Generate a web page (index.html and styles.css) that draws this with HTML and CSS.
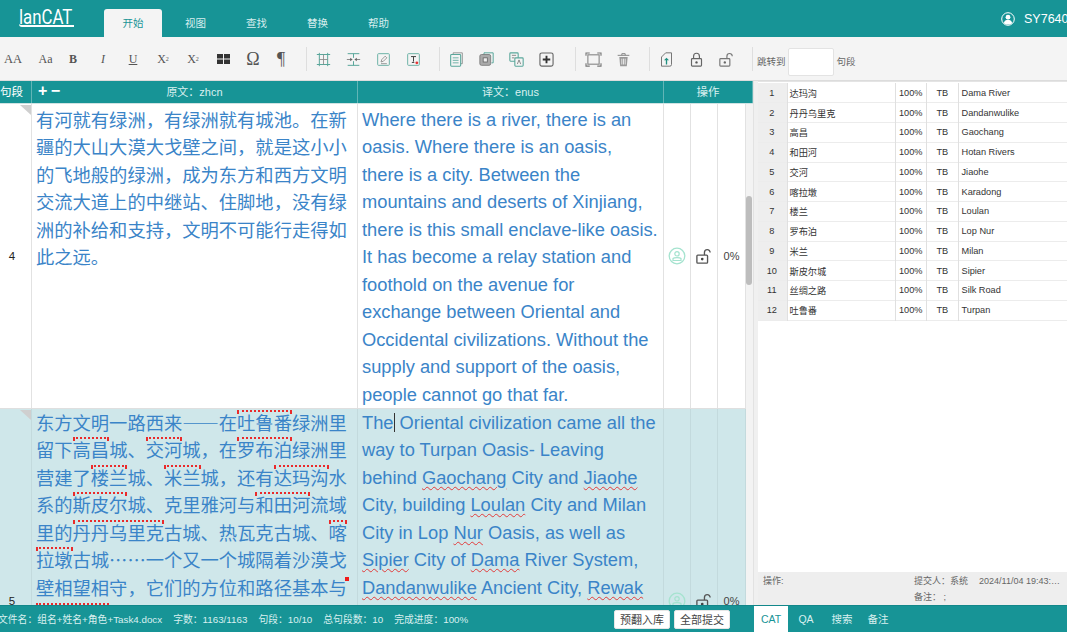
FILE: index.html
```html
<!DOCTYPE html>
<html lang="zh-CN">
<head>
    <meta charset="UTF-8">
    <meta name="viewport" content="width=device-width, initial-scale=1.0">
    <title>lanCAT</title>
    <link rel="stylesheet" href="styles.css">
</head>
<body>
    <header class="topbar">
        <div class="logo"><span class="logo-text">lanCAT</span></div>
        <nav class="menu">
            <a class="menu-item active">开始</a>
            <a class="menu-item">视图</a>
            <a class="menu-item">查找</a>
            <a class="menu-item">替换</a>
            <a class="menu-item">帮助</a>
        </nav>
        <div class="user">
            <svg width="14" height="14" viewBox="0 0 14 14"><circle cx="7" cy="7" r="6.3" fill="none" stroke="#fff" stroke-width="1"/><circle cx="7" cy="5.2" r="2.4" fill="#fff"/><path d="M2.8 11.2c.6-2.6 2.2-3.4 4.2-3.4s3.6.8 4.2 3.4c-2.4 1.7-6 1.7-8.4 0z" fill="#fff"/></svg>
            <span>SY7640</span>
        </div>
    </header>

    <div class="toolbar">
        <div class="group group-format">
            <span class="tool serif tool-aa">AA</span>
            <span class="tool serif tool-sm tool-shift">Aa</span>
            <span class="tool serif tool-sm bold">B</span>
            <span class="tool serif tool-sm italic">I</span>
            <span class="tool serif tool-sm underline">U</span>
            <span class="tool serif tool-sm">X<sup>2</sup></span>
            <span class="tool serif tool-sm">X<sub>2</sub></span>
            <span class="tool"><svg class="icon-grid" viewBox="0 0 13 10" fill="#333"><rect width="6" height="4.5"/><rect x="7" width="6" height="4.5"/><rect y="5.5" width="6" height="4.5"/><rect x="7" y="5.5" width="6" height="4.5"/></svg></span>
            <span class="tool serif tool-lg">Ω</span>
            <span class="tool serif tool-lg tool-pilcrow">¶</span>
        </div>
        <i class="sep"></i>
        <div class="group">
            <span class="tool"><svg viewBox="0 0 18 18" fill="none"><path d="M1 3h16M1 15h16M4 1v16M14 1v16" stroke="#5aa79b" stroke-width="1.2"/><path d="M4 9h10M9 3v12" stroke="#888"/></svg></span>
            <span class="tool"><svg viewBox="0 0 18 18" fill="none"><path d="M2 2h14M2 16h14M9 2v5M9 11v5" stroke="#5aa79b" stroke-width="1.2"/><path d="M1 9h5M17 9h-5" stroke="#777"/><path d="M8 9L5 7v4zM10 9l3-2v4z" fill="#666"/></svg></span>
            <span class="tool"><svg viewBox="0 0 18 18" fill="none"><rect x="2" y="2" width="14" height="14" rx="1" stroke="#6fb3a8" stroke-width="1.2"/><path d="M6 12l1-3 4-4 2 2-4 4zM6 14h7" stroke="#888"/></svg></span>
            <span class="tool"><svg viewBox="0 0 18 18" fill="none"><rect x="2" y="2" width="14" height="14" rx="1" stroke="#6fb3a8" stroke-width="1.2"/><path d="M6 5.5h6M9 5.5v6M7 12.5h3" stroke="#444" stroke-width="1.2"/><circle cx="13" cy="13" r="1.7" fill="#e53333"/></svg></span>
        </div>
        <i class="sep"></i>
        <div class="group">
            <span class="tool"><svg viewBox="0 0 18 18" fill="none"><path d="M5 3V1h11v13h-2" stroke="#888"/><rect x="2" y="3" width="12" height="14" rx="1" stroke="#5aa79b" stroke-width="1.3"/><path d="M4.500 7h7M4.500 10h7M4.500 13h7" stroke="#5aa79b"/></svg></span>
            <span class="tool"><svg viewBox="0 0 18 18" fill="none"><path d="M6 3V1h11v12h-2" stroke="#5aa79b" stroke-width="1.2"/><rect x="1" y="3" width="13" height="13" rx="2" fill="#aaa" stroke="#777"/><rect x="5" y="7" width="5" height="5" fill="#eee" stroke="#666"/></svg></span>
            <span class="tool"><svg viewBox="0 0 18 18" fill="none"><rect x="1" y="1" width="10" height="10" rx="1" stroke="#5aa79b" stroke-width="1.3"/><rect x="7" y="7" width="10" height="10" rx="1" fill="#f4f4f4" stroke="#5aa79b" stroke-width="1.3"/><path d="M3.5 4h5M3.5 7h3" stroke="#777"/><path d="M10 14.5l2-5 2 5" stroke="#777"/></svg></span>
            <span class="tool"><svg viewBox="0 0 16 16" fill="none"><rect x="1" y="1" width="14" height="14" rx="2" stroke="#666" stroke-width="1.2"/><path d="M8 4v8M4 8h8" stroke="#333" stroke-width="2"/></svg></span>
        </div>
        <i class="sep sep-widest"></i>
        <div class="group">
            <span class="tool"><svg class="icon-wide" viewBox="0 0 18 16" fill="none"><rect x="3" y="3" width="12" height="10" stroke="#888" stroke-width="1.2"/><path d="M1 4V1h4M13 1h4v3M17 12v3h-4M5 15H1v-3" stroke="#777" stroke-width="1.2"/></svg></span>
            <span class="tool"><svg viewBox="0 0 16 18" fill="none"><path d="M1 4h14M6 4V2h4v2" stroke="#888" stroke-width="1.2"/><path d="M3 6h10l-1 11H4z" fill="#999"/><path d="M6 8v7M8 8v7M10 8v7" stroke="#f4f4f4"/></svg></span>
        </div>
        <i class="sep"></i>
        <div class="group">
            <span class="tool"><svg viewBox="0 0 16 18" fill="none"><path d="M2 6l5-5h7v14a2 2 0 0 1-2 2H2z" stroke="#777" stroke-width="1.2"/><path d="M8 15V9" stroke="#1f8f80" stroke-width="1.6"/><path d="M8 7l-3 3h6z" fill="#1f8f80"/></svg></span>
            <span class="tool"><svg viewBox="0 0 16 18" fill="none"><rect x="2" y="8" width="12" height="9" rx="1" stroke="#666" stroke-width="1.4"/><path d="M4.5 8V5a3.5 3.5 0 0 1 7 0v3" stroke="#666" stroke-width="1.4"/><circle cx="8" cy="12.5" r="1.4" fill="#555"/></svg></span>
            <span class="tool"><svg viewBox="0 0 18 18" fill="none"><rect x="1" y="8" width="12" height="9" rx="1" stroke="#777" stroke-width="1.4"/><path d="M9.5 8V5a3.200 3.200 0 0 1 6.4 0" stroke="#777" stroke-width="1.4"/><circle cx="7" cy="12.5" r="1.4" fill="#666"/></svg></span>
        </div>
        <i class="sep"></i>
        <span class="jump-label">跳转到</span>
        <input class="jump-input" type="text">
        <span class="jump-label">句段</span>
    </div>

    <main class="main">
        <section class="editor">
            <div class="grid-head">
                <div class="head-num">句段</div>
                <div class="head-source"><b class="plus-minus">+ −</b><span>原文：zhcn</span></div>
                <div class="head-target">译文：enus</div>
                <div class="head-ops">操作</div>
            </div>
            <div class="grid-body">
                <div class="rows">
                    <div class="row">
                        <div class="cell-num"><i class="fold"></i>4</div>
                        <div class="cell-source">有河就有绿洲，有绿洲就有城池。在新疆的大山大漠大戈壁之间，就是这小小的飞地般的绿洲，成为东方和西方文明交流大道上的中继站、住脚地，没有绿洲的补给和支持，文明不可能行走得如此之远。</div>
                        <div class="cell-target">Where there is a river, there is an<br>oasis. Where there is an oasis,<br>there is a city. Between the<br>mountains and deserts of Xinjiang,<br>there is this small enclave-like oasis.<br>It has become a relay station and<br>foothold on the avenue for<br>exchange between Oriental and<br>Occidental civilizations. Without the<br>supply and support of the oasis,<br>people cannot go that far.</div>
                        <div class="cell-op"><svg width="18" height="18" viewBox="0 0 18 18" fill="none"><circle cx="9" cy="9" r="7.8" stroke="#a5e3cf" stroke-width="1.3"/><circle cx="9" cy="6.8" r="2.2" stroke="#a5e3cf" stroke-width="1.2"/><path d="M5 13.5v-2c1-1.2 7-1.2 8 0v2z" stroke="#a5e3cf" stroke-width="1.2"/></svg></div>
                        <div class="cell-op"><svg width="16" height="16" viewBox="0 0 18 18" fill="none"><rect x="1" y="8" width="12" height="9" rx="1" stroke="#555" stroke-width="1.5"/><path d="M9.5 8V5a3.2 3.2 0 0 1 6.4 0" stroke="#555" stroke-width="1.5"/><circle cx="7" cy="12.5" r="1.5" fill="#444"/></svg></div>
                        <div class="cell-op cell-pct">0%</div>
                    </div>
                    <div class="row row-active">
                        <div class="cell-num"><i class="fold"></i>5</div>
                        <div class="cell-source">东方文明一路西来——在<span class="term">吐鲁番</span>绿洲里留下<span class="term">高昌</span>城、<span class="term">交河</span>城，在<span class="term">罗布泊</span>绿洲里营建了<span class="term">楼兰</span>城、<span class="term">米兰</span>城，还有<span class="term">达玛沟</span>水系的<span class="term">斯皮尔</span>城、克里雅河与<span class="term">和田河</span>流域里的<span class="term">丹丹乌里克</span>古城、热瓦克古城、<span class="term">喀</span><span class="term">拉墩</span>古城……一个又一个城隔着沙漠戈壁相望相守，它们的方位和路径基本与<i class="tip"></i><i class="term-cut"></i></div>
                        <div class="cell-target">The<i class="caret"></i> Oriental civilization came all the way to Turpan Oasis- Leaving behind <span class="typo">Gaochang</span> City and <span class="typo">Jiaohe</span> City, building <span class="typo">Loulan</span> City and Milan City in Lop <span class="typo">Nur</span> Oasis, as well as <span class="typo">Sipier</span> City of <span class="typo">Dama</span> River System, <span class="typo">Dandanwulike</span> Ancient City, <span class="typo">Rewak</span></div>
                        <div class="cell-op"><svg width="18" height="18" viewBox="0 0 18 18" fill="none"><circle cx="9" cy="9" r="7.8" stroke="#a5e3cf" stroke-width="1.3"/><circle cx="9" cy="6.8" r="2.2" stroke="#a5e3cf" stroke-width="1.2"/><path d="M5 13.5v-2c1-1.2 7-1.2 8 0v2z" stroke="#a5e3cf" stroke-width="1.2"/></svg></div>
                        <div class="cell-op"><svg width="16" height="16" viewBox="0 0 18 18" fill="none"><rect x="1" y="8" width="12" height="9" rx="1" stroke="#555" stroke-width="1.5"/><path d="M9.5 8V5a3.2 3.2 0 0 1 6.4 0" stroke="#555" stroke-width="1.5"/><circle cx="7" cy="12.5" r="1.5" fill="#444"/></svg></div>
                        <div class="cell-op cell-pct">0%</div>
                    </div>
                </div>
                <div class="scroll-track"><div class="scroll-thumb"></div></div>
            </div>
        </section>

        <aside class="side">
            <div class="term-wrap">
                <table class="term-table">
                    <tr><th>1</th><td class="zh">达玛沟</td><td class="mid">100%</td><td class="mid">TB</td><td>Dama River</td></tr>
                    <tr><th>2</th><td class="zh">丹丹乌里克</td><td class="mid">100%</td><td class="mid">TB</td><td>Dandanwulike</td></tr>
                    <tr><th>3</th><td class="zh">高昌</td><td class="mid">100%</td><td class="mid">TB</td><td>Gaochang</td></tr>
                    <tr><th>4</th><td class="zh">和田河</td><td class="mid">100%</td><td class="mid">TB</td><td>Hotan Rivers</td></tr>
                    <tr><th>5</th><td class="zh">交河</td><td class="mid">100%</td><td class="mid">TB</td><td>Jiaohe</td></tr>
                    <tr><th>6</th><td class="zh">喀拉墩</td><td class="mid">100%</td><td class="mid">TB</td><td>Karadong</td></tr>
                    <tr><th>7</th><td class="zh">楼兰</td><td class="mid">100%</td><td class="mid">TB</td><td>Loulan</td></tr>
                    <tr><th>8</th><td class="zh">罗布泊</td><td class="mid">100%</td><td class="mid">TB</td><td>Lop Nur</td></tr>
                    <tr><th>9</th><td class="zh">米兰</td><td class="mid">100%</td><td class="mid">TB</td><td>Milan</td></tr>
                    <tr><th>10</th><td class="zh">斯皮尔城</td><td class="mid">100%</td><td class="mid">TB</td><td>Sipier</td></tr>
                    <tr><th>11</th><td class="zh">丝绸之路</td><td class="mid">100%</td><td class="mid">TB</td><td>Silk Road</td></tr>
                    <tr><th>12</th><td class="zh">吐鲁番</td><td class="mid">100%</td><td class="mid">TB</td><td>Turpan</td></tr>
                </table>
            </div>
            <div class="info">
                <div class="info-label">操作:</div>
                <div class="info-meta">
                    <div class="info-line"><span>提交人：系统</span><span class="info-date">2024/11/04 19:43:…</span></div>
                    <div class="info-line">备注： ;</div>
                </div>
            </div>
        </aside>
    </main>

    <footer class="bottom">
        <div class="status">
            <span class="stat stat-file">文件名：组名+姓名+角色+Task4.docx</span>
            <span class="stat">字数：1163/1163</span>
            <span class="stat">句段：10/10</span>
            <span class="stat">总句段数：10</span>
            <span class="stat">完成进度：100%</span>
            <div class="status-btns">
                <button class="btn">预翻入库</button>
                <button class="btn">全部提交</button>
            </div>
        </div>
        <div class="side-tabs">
            <a class="side-tab active">CAT</a>
            <a class="side-tab">QA</a>
            <a class="side-tab">搜索</a>
            <a class="side-tab">备注</a>
        </div>
    </footer>
</body>
</html>
```

FILE: styles.css
```css
* {
    box-sizing: border-box;
}

body {
    margin: 0;
    height: 100vh;
    overflow: hidden;
    display: flex;
    flex-direction: column;
    background: #fff;
    color: #333;
    font-family: "Liberation Sans", "Noto Sans CJK SC", sans-serif;
}

.topbar {
    height: 37px;
    flex: none;
    display: flex;
    background: #179496;
    color: #fff;
}

.logo {
    width: 55px;
    height: 18px;
    margin: 9px 0 0 19px;
    border-bottom: 2px solid #fff;
    border-bottom-left-radius: 3px;
    font-family: "Roboto", sans-serif;
    font-size: 21px;
    line-height: 17px;
    white-space: nowrap;
}

.logo-text {
    display: inline-block;
    transform: scaleX(0.8);
    transform-origin: left;
}

.menu {
    display: flex;
    margin-left: 30px;
    padding-top: 9px;
}

.menu-item {
    width: 61px;
    text-align: center;
    font-size: 10.5px;
    line-height: 28px;
    color: #d6eeee;
}

.menu-item.active {
    width: 58px;
    margin-right: 3px;
    background: #f4f4f4;
    border-radius: 3px 3px 0 0;
    color: #179496;
}

.user {
    margin-left: auto;
    width: 66px;
    flex: none;
    display: flex;
    align-items: center;
    gap: 9px;
    overflow: hidden;
    font-size: 12.5px;
    white-space: nowrap;
}

.user svg {
    flex: none;
}

.toolbar {
    height: 44px;
    flex: none;
    display: flex;
    align-items: center;
    background: #f4f4f4;
    border-bottom: 1px solid #dcdcdc;
    padding-top: 1px;
}

.group {
    display: flex;
    align-items: center;
}

.group-format {
    margin-left: -2px;
    margin-right: -3px;
}

.tool {
    width: 30px;
    height: 24px;
    display: flex;
    align-items: center;
    justify-content: center;
    color: #555;
    font-size: 12px;
}

.tool svg {
    width: 15px;
    height: 15px;
}

.tool svg.icon-grid {
    width: 13px;
    height: 10px;
}

.tool svg.icon-wide {
    width: 17px;
}

.serif {
    font-family: "Liberation Serif", serif;
}

.tool-aa {
    font-size: 12.5px;
}

.tool-sm {
    font-size: 12px;
}

.tool-shift {
    padding-left: 5px;
}

.tool-lg {
    font-size: 18px;
}

.tool-pilcrow {
    padding-right: 4px;
}

.bold {
    font-weight: bold;
}

.italic {
    font-style: italic;
}

.underline {
    text-decoration: underline;
}

.tool sup,
.tool sub {
    font-size: 6px;
}

.sep {
    width: 1px;
    height: 24px;
    margin: 0 1px 0 11px;
    background: #dedede;
}

.sep-widest {
    margin-left: 14px;
    margin-right: 2px;
}

.jump-label {
    margin: 4px 0 0 3px;
    font-size: 9.5px;
    color: #666;
}

.jump-input {
    width: 46px;
    height: 28px;
    margin: 5px 0 0 2px;
    border: 1px solid #e3e3e3;
    border-radius: 2px;
    background: #fff;
}

.main {
    flex: 1;
    min-height: 0;
    display: flex;
}

.editor {
    width: 753px;
    flex: none;
    display: flex;
    flex-direction: column;
}

.grid-head {
    height: 23px;
    flex: none;
    display: grid;
    grid-template-columns: 32px 326px 306px 1fr;
    background: #179496;
    color: #d9f0f0;
    font-size: 11px;
    line-height: 22px;
    text-align: center;
    border-bottom: 1px solid #cfe3e3;
}

.grid-head > div {
    border-right: 1px solid #62b5b6;
}

.head-num {
    text-align: left;
    font-size: 11.5px;
    color: #fff;
}

.head-source {
    position: relative;
}

.plus-minus {
    position: absolute;
    left: 6px;
    top: 0;
    font-size: 16px;
    line-height: 20px;
    word-spacing: -1px;
    color: #fff;
}

.head-ops {
    font-size: 11.5px;
}

.grid-body {
    flex: 1;
    min-height: 0;
    display: flex;
    overflow: hidden;
}

.rows {
    width: 746px;
    flex: none;
}

.row {
    height: 305px;
    display: grid;
    grid-template-columns: 32px 326px 306px 27px 27px 28px;
    border-bottom: 1px solid #dfdfdf;
}

.row-active {
    height: 384px;
    background: #cfe7ea;
}

.row > div {
    border-right: 1px solid #e2e2e2;
}

.row-active > div {
    border-right-color: #c3dadd;
}

.cell-num {
    position: relative;
    display: flex;
    align-items: center;
    justify-content: center;
    padding-right: 7px;
    font-size: 11.5px;
    color: #222;
}

.fold {
    position: absolute;
    top: 1px;
    right: 0;
    border-top: 10px solid #cfcfcf;
    border-left: 11px solid transparent;
}

.cell-source,
.cell-target {
    font-size: 18.3px;
    line-height: 27.45px;
    color: #3a84c8;
    overflow: hidden;
}

.cell-source {
    padding: 2px 5px 0 4px;
    font-family: "Noto Sans CJK SC", sans-serif;
}

.cell-target {
    padding: 2px 2px 0 4px;
    white-space: nowrap;
}

.row-active .cell-source,
.row-active .cell-target {
    padding-top: 0;
}

.row-active .cell-target {
    white-space: normal;
}

.cell-op {
    display: flex;
    align-items: center;
    justify-content: center;
}

.cell-pct {
    font-size: 11px;
    color: #444;
}

/* term marks sit over the text so the line boxes stay untouched */
.term {
    position: relative;
}

.term::before {
    content: "";
    position: absolute;
    top: 1px;
    left: 0;
    right: 0;
    border-top: 2px dotted #ea2a2a;
}

.term::after {
    content: "";
    position: absolute;
    top: 1px;
    left: 0;
    right: 0;
    height: 4px;
    border-left: 2px solid #ea2a2a;
    border-right: 2px solid #ea2a2a;
}

.term-cut {
    display: block;
    width: 73px;
    margin-top: 2px;
    border-top: 2px dotted #ea2a2a;
}

.tip {
    display: inline-block;
    width: 4px;
    height: 4px;
    margin: 0 -2px;
    vertical-align: 14px;
    background: #f01a1a;
}

.typo {
    text-decoration: underline wavy #e23b3b 1px;
    text-underline-offset: 2px;
}

.caret {
    display: inline-block;
    width: 0;
    height: 19px;
    vertical-align: -3px;
    border-left: 1px solid #333;
}

.scroll-track {
    width: 7px;
    flex: none;
    background: #f3f3f3;
}

.scroll-thumb {
    width: 6px;
    height: 89px;
    margin-top: 92px;
    border-radius: 3px;
    background: #bdbdbd;
}

.side {
    flex: 1;
    min-width: 0;
    display: flex;
    flex-direction: column;
    padding-left: 4px;
    background: #f0f0f0;
    border-left: 1px solid #e2e2e2;
}

.term-wrap {
    flex: 1;
    min-height: 0;
    background: #fff;
    padding-top: 1px;
    border-top: 1px solid #e4e4e4;
}

.term-table {
    width: 100%;
    border-collapse: collapse;
    table-layout: fixed;
    font-size: 9.2px;
    color: #333;
}

.term-table tr {
    height: 19.75px;
    border-bottom: 1px solid #ececec;
}

.term-table th {
    width: 29px;
    background: #eee;
    font-weight: normal;
    text-align: center;
    padding-right: 2px;
}

.term-table td {
    padding: 0 0 0 3px;
    border-left: 1px solid #e0e0e0;
    white-space: nowrap;
    overflow: hidden;
}

.term-table .zh {
    width: 108px;
    padding-left: 2px;
    font-family: "Noto Sans CJK SC", sans-serif;
}

.term-table .mid {
    width: 31.5px;
    padding: 0;
    text-align: center;
}

.info {
    height: 33px;
    flex: none;
    display: flex;
    background: #eee;
    font-size: 9px;
    color: #666;
    line-height: 16px;
    padding-top: 1px;
}

.info-label {
    width: 156px;
    padding-left: 5px;
}

.info-date {
    margin-left: 11px;
    white-space: nowrap;
}

.info-line {
    white-space: nowrap;
}

.bottom {
    height: 27px;
    flex: none;
    display: flex;
    background: #179496;
    border-top: 1px solid #12878a;
    color: #d9f0f0;
    font-size: 9.8px;
}

.status {
    width: 754px;
    flex: none;
    display: flex;
    align-items: center;
    white-space: nowrap;
}

.stat {
    margin-right: 11px;
}

.stat-file {
    margin-left: -2px;
}

.status-btns {
    margin-left: auto;
    margin-right: 24px;
    display: flex;
    gap: 4px;
}

.btn {
    width: 56px;
    height: 19px;
    padding: 0;
    border: 1px solid #e6e6e6;
    border-radius: 2px;
    background: #fff;
    color: #444;
    font-family: inherit;
    font-size: 11px;
}

.side-tabs {
    flex: 1;
    display: flex;
    align-items: stretch;
    font-size: 10.5px;
    line-height: 27px;
}

.side-tab {
    width: 36px;
    text-align: center;
}

.side-tab.active {
    width: 34px;
    background: #fff;
    color: #179496;
}
```
